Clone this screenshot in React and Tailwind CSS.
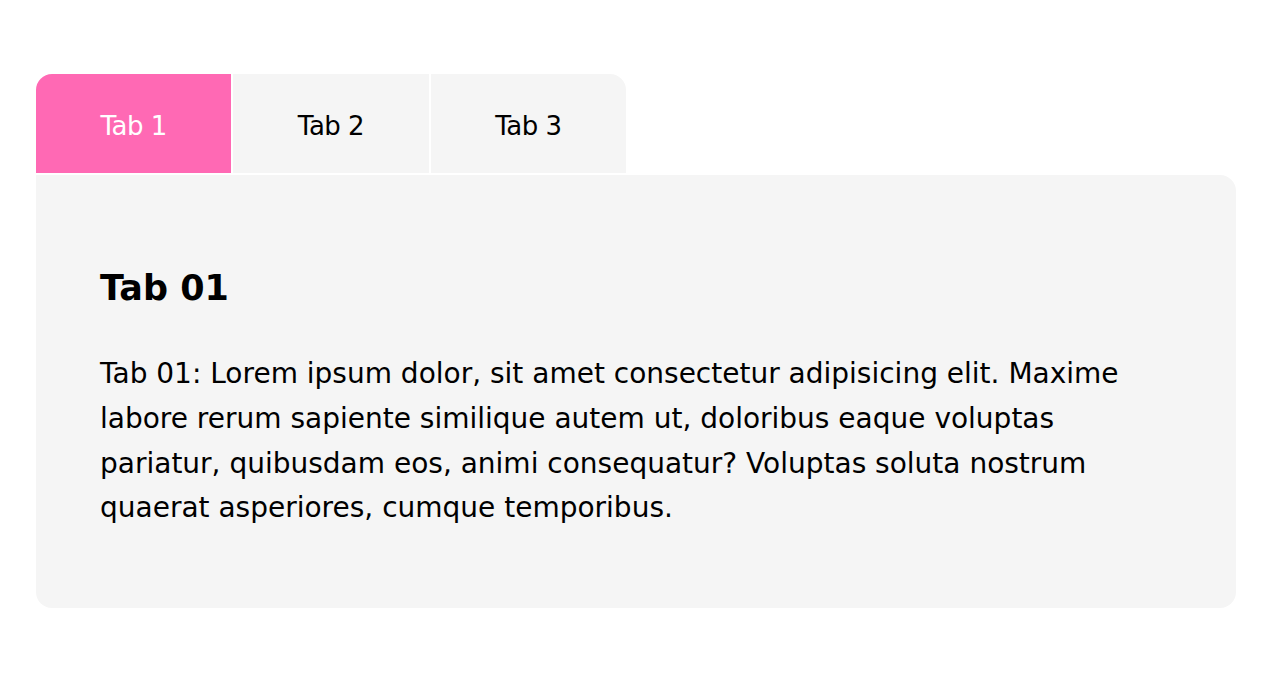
export default function App() {
  const tabs = ['Tab 1', 'Tab 2', 'Tab 3']
  const active = 0

  return (
    <div
      className="min-h-screen bg-white pt-[74px] px-[36px]"
      style={{ fontFamily: '"DejaVu Sans", sans-serif' }}
    >
      <div className="w-[1200px]">
        <div className="flex gap-[2px] w-[590px] rounded-t-2xl overflow-hidden">
          {tabs.map((t, i) => (
            <button
              key={t}
              className={
                i === active
                  ? 'flex-1 h-[99px] pt-[5px] flex items-center justify-center bg-[#ff69b4] text-white text-[26px] tracking-[-0.5px]'
                  : 'flex-1 h-[99px] pt-[5px] flex items-center justify-center bg-[#f5f5f5] text-black text-[26px] tracking-[-0.5px]'
              }
            >
              {t}
            </button>
          ))}
        </div>

        <div className="mt-[2px] bg-[#f5f5f5] rounded-b-2xl rounded-tr-2xl pl-16 pr-16 pt-[92px] pb-[77px]">
          <h2 className="text-[35px] font-bold leading-[1.2] text-black">Tab 01</h2>
          <p className="mt-[43px] text-[28px] leading-[1.6] text-black">
            Tab 01: Lorem ipsum dolor, sit amet consectetur adipisicing elit. Maxime labore rerum sapiente
            similique autem ut, doloribus eaque voluptas pariatur, quibusdam eos, animi consequatur? Voluptas
            soluta nostrum quaerat asperiores, cumque temporibus.
          </p>
        </div>
      </div>
    </div>
  )
}
